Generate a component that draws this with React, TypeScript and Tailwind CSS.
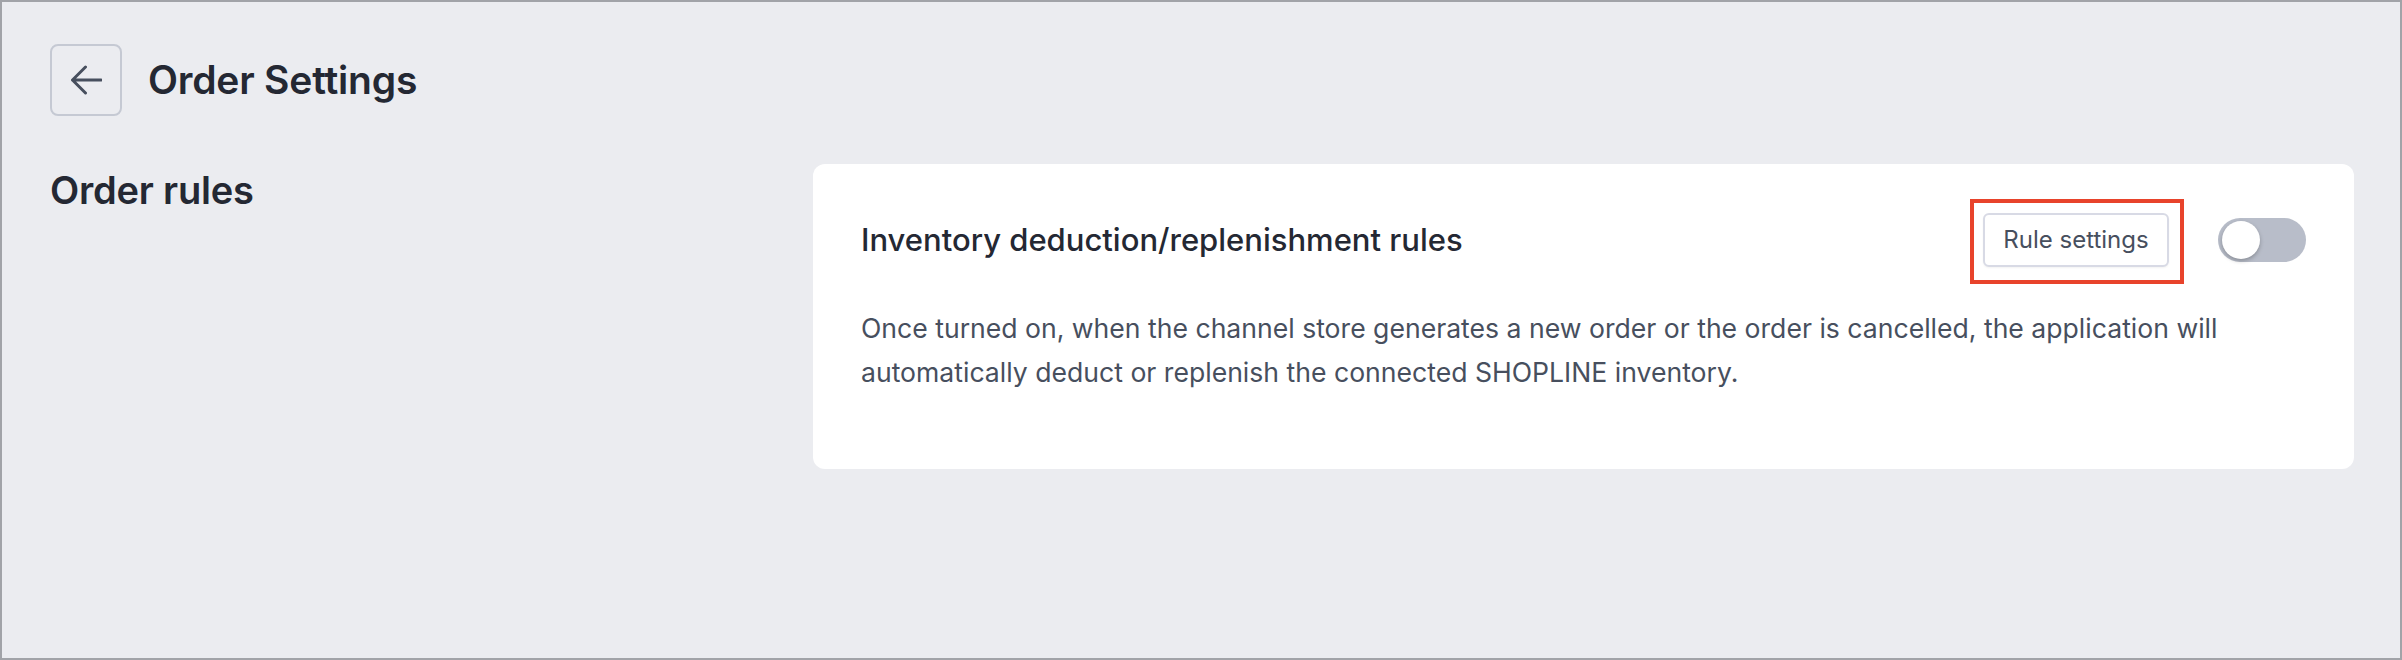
import React from "react";

function BackArrow() {
  return (
    <svg width="32" height="30" viewBox="0 0 32 30" fill="none">
      <path
        d="M31 15H2.5M15.5 2L2.5 15L15.5 28"
        stroke="#474f5e"
        strokeWidth="3"
        strokeLinecap="round"
        strokeLinejoin="round"
      />
    </svg>
  );
}

export default function App() {
  return (
    <div
      className="w-[2402px] h-[660px] box-border border-2 border-[#a1a3a8] bg-[#ebecf0] text-[#242833] overflow-hidden"
      style={{ fontFamily: "Inter, 'Noto Sans', sans-serif" }}
    >
      <div className="pl-[48px] pr-[46px] pt-[42px]">
        <div className="flex items-center gap-[26px]">
          <button className="w-[72px] h-[72px] box-border rounded-[8px] border-2 border-[#c5c9d3] flex items-center justify-center bg-transparent">
            <BackArrow />
          </button>
          <h1 className="text-[39px] leading-[44px] font-semibold tracking-[-0.2px]">Order Settings</h1>
        </div>
        <div className="flex mt-[48px]">
          <div className="w-[763px] shrink-0 pt-[4px]">
            <h2 className="text-[38px] leading-[44px] font-semibold tracking-[-0.2px]">Order rules</h2>
          </div>
          <div className="flex-1 bg-white rounded-[12px] pl-[48px] pr-[48px] pt-[48px] pb-[75px]">
            <div className="flex items-center h-[56px]">
              <div className="flex-1 text-[31px] leading-[38px] font-medium">
                Inventory deduction/replenishment rules
              </div>
              <div className="relative">
                <button className="h-[54px] w-[186px] box-border rounded-[6px] border-2 border-[#d8dae5] bg-white text-[24px] text-[#474f5e] shadow-[0_1px_2px_rgba(0,0,0,0.05)]">
                  Rule settings
                </button>
                <div className="absolute left-[-13px] top-[-14px] w-[214px] h-[85px] box-border border-[4px] border-[#e8432b] pointer-events-none" />
              </div>
              <div className="ml-[49px] w-[88px] h-[44px] rounded-full bg-[#b8bdc9] relative">
                <div className="absolute left-[4px] top-[3px] w-[38px] h-[38px] rounded-full bg-white shadow-[0_2px_4px_rgba(0,0,0,0.25)]" />
              </div>
            </div>
            <p className="mt-[38px] text-[26.6px] leading-[44px] text-[#474f5e]">
              Once turned on, when the channel store generates a new order or the order is cancelled, the application will automatically deduct or replenish the connected SHOPLINE inventory.
            </p>
          </div>
        </div>
      </div>
    </div>
  );
}
